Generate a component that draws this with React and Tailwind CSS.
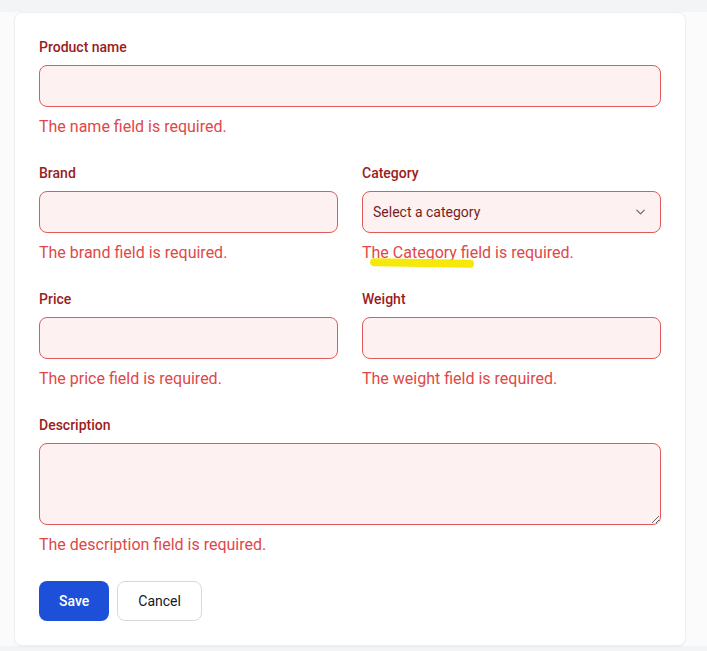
import { ChevronDown } from 'lucide-react'

const labelCls = 'block mb-2 text-sm font-medium text-[#9b1c1c]'
const inputCls =
  'block w-full h-[42px] rounded-lg border border-[#e05a5a] bg-[#fdf1f1] px-2.5 text-sm text-[#771d1d] outline-none'
const errorCls = 'mt-2 text-base leading-6 text-[#e04848]'

function Field({ label, error, children }) {
  return (
    <div>
      <label className={labelCls}>{label}</label>
      {children}
      <p className={errorCls}>{error}</p>
    </div>
  )
}

export default function App() {
  return (
    <div className="min-h-screen bg-[#f3f4f6] pt-3 pb-[6px] font-['Roboto',sans-serif]">
      <div className="bg-[#fbfbfb] px-[14px] pr-[21px]">
        <form className="rounded-lg border border-[#efefef] bg-white p-6 shadow-[0_1px_2px_rgba(0,0,0,0.04)]">
          <div className="grid grid-cols-2 gap-x-6 gap-y-6">
            <div className="col-span-2">
              <Field label="Product name" error="The name field is required.">
                <input className={inputCls} />
              </Field>
            </div>

            <Field label="Brand" error="The brand field is required.">
              <input className={inputCls} />
            </Field>

            <Field label="Category" error="The Category field is required.">
              <div className="relative">
                <select className={`${inputCls} appearance-none pl-[10px] pr-8 text-[#5b2a2a]`} defaultValue="">
                  <option value="">Select a category</option>
                </select>
                <ChevronDown
                  className="pointer-events-none absolute right-[13px] top-1/2 -translate-y-1/2 text-[#6b6b6b]"
                  size={15}
                  strokeWidth={2}
                />
                <span className="pointer-events-none absolute left-[8px] top-[68px] h-[8px] w-[104px] rotate-[1deg] rounded-sm bg-[#f7e80c]" />
              </div>
            </Field>

            <Field label="Price" error="The price field is required.">
              <input className={inputCls} />
            </Field>

            <Field label="Weight" error="The weight field is required.">
              <input className={inputCls} />
            </Field>

            <div className="col-span-2">
              <Field label="Description" error="The description field is required.">
                <textarea rows={3} className={`${inputCls} h-[82px] resize-y py-2.5`} />
              </Field>
            </div>
          </div>

          <div className="mt-6 flex gap-2">
            <button type="button" className="h-10 rounded-lg bg-[#1d4fd8] px-5 text-sm font-medium text-white">
              Save
            </button>
            <button type="button" className="h-10 rounded-lg border border-[#d9d9d9] bg-white px-5 text-sm text-[#111827]">
              Cancel
            </button>
          </div>
        </form>
      </div>
    </div>
  )
}
